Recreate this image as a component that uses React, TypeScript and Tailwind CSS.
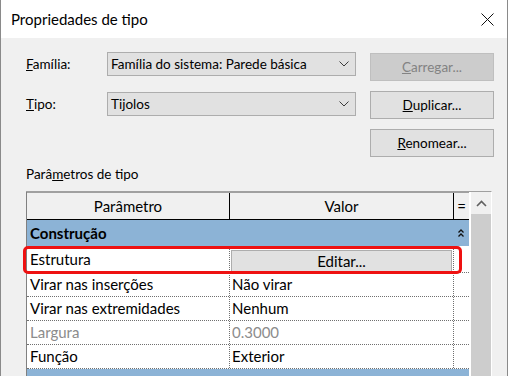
import React from "react";

function Chevron() {
  return (
    <svg width="10" height="6" viewBox="0 0 10 6" fill="none">
      <path d="M0.5 0.5 L5 5 L9.5 0.5" stroke="#3c3c3c" strokeWidth="1" />
    </svg>
  );
}

function ComboBox({ value }: { value: string }) {
  return (
    <div className="w-[249px] h-[24px] flex items-center justify-between border border-[#adadad] bg-[#e1e1e1] pl-[3px] pr-[6px]">
      <span className="whitespace-nowrap">{value}</span>
      <Chevron />
    </div>
  );
}

function DialogButton({ children, disabled }: { children: React.ReactNode; disabled?: boolean }) {
  return (
    <div
      className={
        disabled
          ? "w-[124px] h-[28px] flex items-center justify-center border border-[#bfbfbf] bg-[#cccccc] text-[#838383]"
          : "w-[124px] h-[28px] flex items-center justify-center border border-[#adadad] bg-[#e1e1e1]"
      }
    >
      {children}
    </div>
  );
}

const rows = [
  { name: "Virar nas inserções", value: "Não virar" },
  { name: "Virar nas extremidades", value: "Nenhum" },
  { name: "Largura", value: "0.3000", muted: true },
  { name: "Função", value: "Exterior" },
];

export default function App() {
  return (
    <div className="relative w-[508px] h-[376px] overflow-hidden bg-[#f0f0f0] border-x border-[#8a8a8a] font-['Lato',sans-serif] text-[13.5px] text-black">
      <div className="h-[38px] bg-white flex items-center justify-between pl-[10px] pr-[13px]">
        <span className="text-[15px]">Propriedades de tipo</span>
        <svg width="13" height="13" viewBox="0 0 13 13" fill="none">
          <path d="M0.5 0.5 L12.5 12.5 M12.5 0.5 L0.5 12.5" stroke="#111" strokeWidth="1" />
        </svg>
      </div>

      <div className="pl-[25px]">
        <div className="mt-[14px] flex items-start">
          <div className="w-[81px] h-[24px] flex items-center">
            <span><u>F</u>amília:</span>
          </div>
          <ComboBox value="Família do sistema: Parede básica" />
          <div className="ml-[14px] mt-[1px]">
            <DialogButton disabled>
              <span><u>C</u>arregar...</span>
            </DialogButton>
          </div>
        </div>

        <div className="mt-[10px] flex items-start">
          <div className="w-[81px] h-[24px] mt-[1px] flex items-center">
            <span><u>T</u>ipo:</span>
          </div>
          <div className="mt-[1px]">
            <ComboBox value="Tijolos" />
          </div>
          <div className="ml-[14px]">
            <DialogButton>
              <span><u>D</u>uplicar...</span>
            </DialogButton>
          </div>
        </div>

        <div className="mt-[10px] flex pl-[344px]">
          <DialogButton>
            <span><u>R</u>enomear...</span>
          </DialogButton>
        </div>

        <div className="mt-[7px] h-[20px] leading-[20px]">
          Parâ<u>m</u>etros de tipo
        </div>

        <div className="mt-[7px] w-[466px] flex border-t border-[#a0a0a0] border-r border-r-white text-[15px]">
          <div className="w-[443px] flex flex-col border-l border-[#808080]">
            <div className="h-[28px] flex border-t border-[#a0a0a0] border-b border-b-black">
              <div className="w-[203px] flex items-center justify-center border-r border-black">Parâmetro</div>
              <div className="w-[224px] flex items-center justify-center border-r border-black">Valor</div>
              <div className="w-[15px] flex items-center justify-center">=</div>
            </div>

            <div className="h-[26px] flex items-center justify-between bg-[#8cb3d6] pl-[3px] pr-[5px]">
              <span className="font-bold">Construção</span>
              <svg width="6" height="8" viewBox="0 0 6 8" fill="none">
                <path d="M0.5 3.5 L3 1 L5.5 3.5 M0.5 7.5 L3 5 L5.5 7.5" stroke="#111" strokeWidth="1.3" />
              </svg>
            </div>

            <div className="h-[27px] flex bg-white border-b border-dotted border-[#707070]">
              <div className="w-[203px] flex items-center pl-[3px] border-r border-dotted border-[#707070]">Estrutura</div>
              <div className="w-[224px] flex items-end pl-[1px] pr-[1px] border-r border-dotted border-[#707070]">
                <div className="w-full h-[22px] flex items-center justify-center border border-[#adadad] bg-[#e1e1e1]">
                  Editar...
                </div>
              </div>
              <div className="w-[15px]" />
            </div>

            {rows.map((r) => (
              <div key={r.name} className="h-[24px] flex bg-white border-b border-dotted border-[#707070]">
                <div
                  className={
                    r.muted
                      ? "w-[203px] flex items-center pl-[3px] border-r border-dotted border-[#707070] text-[#8c8c8c]"
                      : "w-[203px] flex items-center pl-[3px] border-r border-dotted border-[#707070]"
                  }
                >
                  {r.name}
                </div>
                <div
                  className={
                    r.muted
                      ? "w-[224px] flex items-center pl-[2px] border-r border-dotted border-[#707070] text-[#8c8c8c]"
                      : "w-[224px] flex items-center pl-[2px] border-r border-dotted border-[#707070]"
                  }
                >
                  {r.value}
                </div>
                <div className="w-[15px]" />
              </div>
            ))}

            <div className="h-[26px] bg-[#8cb3d6]" />
          </div>

          <div className="w-[22px] flex flex-col bg-white pl-[2px]">
            <div className="h-[22px] flex items-center justify-center bg-[#f0f0f0]">
              <svg width="11" height="7" viewBox="0 0 11 7" fill="none">
                <path d="M1 6 L5.5 1.5 L10 6" stroke="#606060" strokeWidth="1.6" />
              </svg>
            </div>
            <div className="flex-1 bg-[#cdcdcd]" />
          </div>
        </div>
      </div>

      <div className="absolute left-[22px] top-[246px] w-[439px] h-[28px] border-[3px] border-[#ee1111] rounded-[5px]" />
    </div>
  );
}
